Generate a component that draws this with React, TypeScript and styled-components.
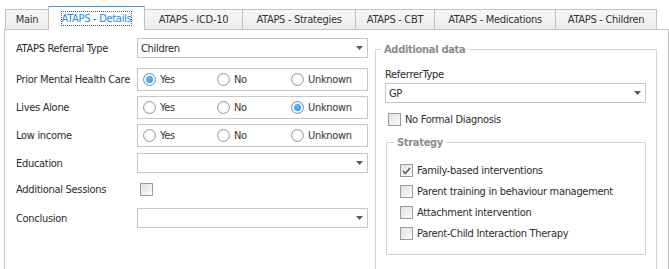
import styled, { createGlobalStyle } from "styled-components";

const GlobalStyle = createGlobalStyle`
  html, body {
    margin: 0;
    padding: 0;
    background: #fff;
  }
  body {
    font-family: "DejaVu Sans Condensed", "DejaVu Sans", sans-serif;
    font-stretch: condensed;
    font-size: 11px;
    letter-spacing: -0.3px;
    color: #2b2b2b;
    white-space: nowrap;
  }
`;

const Page = styled.div`
  width: 669px;
  height: 269px;
  overflow: hidden;
  padding-top: 6px;
  box-sizing: border-box;
`;

const TabStrip = styled.div`
  display: flex;
  align-items: flex-end;
  height: 24px;
  margin-left: 5px;
  margin-bottom: -1px;
  position: relative;
  z-index: 1;
`;

const Tab = styled.div<{ $w: number; $active?: boolean }>`
  box-sizing: border-box;
  width: ${(p) => p.$w}px;
  height: ${(p) => (p.$active ? 24 : 20)}px;
  margin-bottom: ${(p) => (p.$active ? 0 : 1)}px;
  margin-left: -1px;
  &:first-child {
    margin-left: 0;
  }
  border: 1px solid #c4c4c4;
  border-bottom: none;
  border-top-color: ${(p) => (p.$active ? "#3c9ee8" : "#c4c4c4")};
  background: ${(p) => (p.$active ? "#fff" : "linear-gradient(#f7f7f7, #ececec)")};
  color: ${(p) => (p.$active ? "#1b8ae0" : "#333")};
  display: flex;
  justify-content: center;
  align-items: flex-start;
  padding-top: ${(p) => (p.$active ? 5 : 3)}px;
  line-height: 13px;
  position: relative;
  z-index: ${(p) => (p.$active ? 2 : 1)};
`;

const FocusText = styled.span`
  outline: 1px dotted #555;
  outline-offset: 0;
  line-height: 13px;
  height: 13px;
`;

const Panel = styled.div`
  margin-left: 4px;
  width: 665px;
  height: 300px;
  box-sizing: border-box;
  border: 1px solid #c4c4c4;
  display: flex;
  padding: 8px 0 0 11px;
  gap: 7px;
`;

const Form = styled.div`
  width: 352px;
  display: flex;
  flex-direction: column;
`;

const Row = styled.div<{ $h: number; $mt?: number }>`
  display: flex;
  align-items: center;
  height: ${(p) => p.$h}px;
  margin-top: ${(p) => p.$mt ?? 0}px;
`;

const Label = styled.div`
  width: 121px;
  flex: none;
  color: #2b2b2b;
`;

const Combo = styled.div<{ $w: number; $mt?: number }>`
  box-sizing: border-box;
  width: ${(p) => p.$w}px;
  height: 20px;
  margin-top: ${(p) => p.$mt ?? 0}px;
  border: 1px solid #c6c6c6;
  background: #fff;
  display: flex;
  align-items: center;
  padding: 0 4px 0 3px;
  color: #2b2b2b;
`;

const ComboText = styled.span`
  flex: 1;
`;

const RadioBox = styled.div`
  box-sizing: border-box;
  width: 232px;
  height: 23px;
  border: 1px solid #c6c6c6;
  display: flex;
  align-items: center;
  padding-left: 5px;
`;

const RadioOption = styled.label`
  width: 74px;
  display: flex;
  align-items: center;
  gap: 4px;
  color: #333;
`;

const RadioCircle = styled.span<{ $on?: boolean }>`
  box-sizing: border-box;
  width: 13px;
  height: 13px;
  border-radius: 50%;
  border: 1px solid ${(p) => (p.$on ? "#6d8fb0" : "#9a9a9a")};
  background: radial-gradient(circle at 50% 50%, #fff 0, #fff 40%, #e6e6e6 100%);
  display: flex;
  align-items: center;
  justify-content: center;
  &::after {
    content: "";
    display: ${(p) => (p.$on ? "block" : "none")};
    width: 7px;
    height: 7px;
    border-radius: 50%;
    background: radial-gradient(circle at 40% 35%, #5bc0ff, #1a8fe8);
  }
`;

const Box = styled.span`
  box-sizing: border-box;
  width: 13px;
  height: 13px;
  flex: none;
  border: 1px solid #9c9c9c;
  background: linear-gradient(135deg, #e2e2e2, #fafafa);
  display: flex;
  align-items: center;
  justify-content: center;
`;

const CheckRow = styled.label<{ $h: number; $ml?: number; $mt?: number }>`
  display: flex;
  align-items: center;
  gap: 4px;
  height: ${(p) => p.$h}px;
  margin-left: ${(p) => p.$ml ?? 0}px;
  margin-top: ${(p) => p.$mt ?? 0}px;
  color: #2b2b2b;
`;

const Group = styled.fieldset<{ $mt: number; $pl: number }>`
  margin: ${(p) => p.$mt}px 0 0 0;
  padding: 0 0 0 ${(p) => p.$pl}px;
  min-width: 0;
  border: 1px solid #d4d4d4;
`;

const GroupTitle = styled.legend<{ $ml: number }>`
  font-weight: bold;
  color: #8c8c8c;
  padding: 0 3px;
  margin-left: ${(p) => p.$ml}px;
  line-height: 13px;
`;

const RightCol = styled.div`
  width: 282px;
  display: flex;
  flex-direction: column;
`;

const AdditionalData = styled(Group)`
  height: 300px;
  padding-right: 10px;
`;

const FieldLabel = styled.div`
  margin-top: 12px;
  line-height: 13px;
`;

const Strategy = styled(Group)`
  margin-left: 1px;
  padding-bottom: 10px;
`;

const StrategyList = styled.div`
  display: flex;
  flex-direction: column;
  margin-top: 11px;
`;

function Arrow() {
  return (
    <svg width="7" height="4" viewBox="0 0 7 4">
      <path d="M0 0H7L3.5 4Z" fill="#5a5a5a" />
    </svg>
  );
}

function Check({ on }: { on?: boolean }) {
  return (
    <Box>
      {on && (
        <svg width="9" height="8" viewBox="0 0 9 8">
          <path d="M1 4L3.5 6.5L8 1" stroke="#555" strokeWidth="1.5" fill="none" />
        </svg>
      )}
    </Box>
  );
}

function RadioGroup({ value }: { value: string }) {
  return (
    <RadioBox>
      {["Yes", "No", "Unknown"].map((o) => (
        <RadioOption key={o}>
          <RadioCircle $on={o === value} />
          {o}
        </RadioOption>
      ))}
    </RadioBox>
  );
}

const tabs: Array<[string, number]> = [
  ["Main", 44],
  ["ATAPS - Details", 97],
  ["ATAPS - ICD-10", 99],
  ["ATAPS - Strategies", 114],
  ["ATAPS - CBT", 80],
  ["ATAPS - Medications", 122],
  ["ATAPS - Children", 102],
];

const strategies = [
  ["Family-based interventions", true],
  ["Parent training in behaviour management", false],
  ["Attachment intervention", false],
  ["Parent-Child Interaction Therapy", false],
] as const;

export default function App() {
  return (
    <>
      <GlobalStyle />
      <Page>
        <TabStrip>
          {tabs.map(([name, w]) => (
            <Tab key={name} $w={w} $active={name === "ATAPS - Details"}>
              {name === "ATAPS - Details" ? <FocusText>{name}</FocusText> : name}
            </Tab>
          ))}
        </TabStrip>
        <Panel>
          <Form>
            <Row $h={20}>
              <Label>ATAPS Referral Type</Label>
              <Combo $w={232}>
                <ComboText>Children</ComboText>
                <Arrow />
              </Combo>
            </Row>
            <Row $h={23} $mt={10}>
              <Label>Prior Mental Health Care</Label>
              <RadioGroup value="Yes" />
            </Row>
            <Row $h={23} $mt={5}>
              <Label>Lives Alone</Label>
              <RadioGroup value="Unknown" />
            </Row>
            <Row $h={23} $mt={5}>
              <Label>Low income</Label>
              <RadioGroup value="" />
            </Row>
            <Row $h={20} $mt={6}>
              <Label>Education</Label>
              <Combo $w={232}>
                <ComboText />
                <Arrow />
              </Combo>
            </Row>
            <Row $h={20} $mt={6}>
              <Label>Additional Sessions</Label>
              <CheckRow $h={20} $ml={3}>
                <Check />
              </CheckRow>
            </Row>
            <Row $h={20} $mt={9}>
              <Label>Conclusion</Label>
              <Combo $w={232}>
                <ComboText />
                <Arrow />
              </Combo>
            </Row>
          </Form>
          <RightCol>
            <AdditionalData $mt={5} $pl={9}>
              <GroupTitle $ml={-4}>Additional data</GroupTitle>
              <FieldLabel>ReferrerType</FieldLabel>
              <Combo $w={261} $mt={2}>
                <ComboText>GP</ComboText>
                <Arrow />
              </Combo>
              <CheckRow $h={21} $ml={3} $mt={6}>
                <Check />
                No Formal Diagnosis
              </CheckRow>
              <Strategy $mt={6} $pl={13}>
                <GroupTitle $ml={-6}>Strategy</GroupTitle>
                <StrategyList>
                  {strategies.map(([s, on]) => (
                    <CheckRow key={s} $h={21}>
                      <Check on={on} />
                      {s}
                    </CheckRow>
                  ))}
                </StrategyList>
              </Strategy>
            </AdditionalData>
          </RightCol>
        </Panel>
      </Page>
    </>
  );
}
